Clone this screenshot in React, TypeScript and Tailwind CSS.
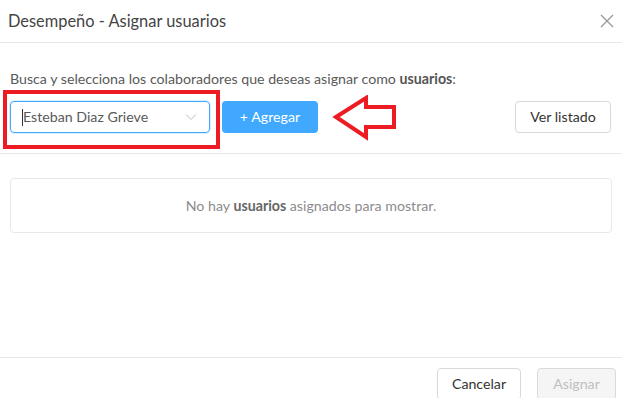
const font = { fontFamily: 'Lato, "Liberation Sans", sans-serif' };

const App = () => {
  return (
    <div className="w-[622px] h-[398px] overflow-hidden bg-white flex flex-col text-[#595959]" style={font}>
      {/* header */}
      <div className="h-[43px] shrink-0 flex items-center justify-between pl-2 pr-[8px] border-b border-[#e8e8e8]">
        <h1 className="text-[16.4px] text-[#444444]">Desempeño - Asignar usuarios</h1>
        <svg width="14" height="14" viewBox="0 0 14 14" className="text-[#999999]">
          <path d="M1 1 L13 13 M13 1 L1 13" stroke="currentColor" strokeWidth="1.3" fill="none" />
        </svg>
      </div>

      {/* search row */}
      <div className="px-[10px] pt-[26px] pb-[20px] border-b border-[#e8e8e8]">
        <p className="text-[14.2px] leading-5 text-[#595959]">
          Busca y selecciona los colaboradores que deseas asignar como <span className="font-bold text-[#555555]">usuarios</span>:
        </p>
        <div className="relative flex items-center mt-3">
          <div className="relative w-[200px] h-8 rounded border border-[#40a9ff] shadow-[0_0_0_1px_rgba(24,144,255,0.15)] flex items-center pl-[11px] pr-3">
            <span className="w-px h-[17px] bg-[#333333]" />
            <span className="text-[14.2px] text-[#595959]">Esteban Diaz Grieve</span>
            <svg width="12" height="8" viewBox="0 0 12 8" className="ml-auto text-[#bfbfbf]">
              <path d="M1 1.5 L6 6.5 L11 1.5" stroke="currentColor" strokeWidth="1" fill="none" />
            </svg>
            {/* annotation frame */}
            <div className="absolute -left-[8px] -top-[12px] w-[217px] h-[59px] border-[4px] border-[#ed1c24] pointer-events-none" />
          </div>
          <button className="ml-3 w-[96px] h-8 rounded bg-[#40a9ff] text-white text-[14.2px]">+ Agregar</button>
          {/* annotation arrow */}
          <svg width="66" height="48" viewBox="0 0 66 48" className="absolute left-[322px] -top-[6px]">
            <polygon points="4,22 34,3 34,12 62,12 62,32 34,32 34,42" fill="none" stroke="#ed1c24" strokeWidth="4" strokeLinejoin="miter" />
          </svg>
          <button className="ml-auto mr-px w-[96px] h-8 rounded border border-[#d9d9d9] bg-white text-[14.2px] text-[#333333]">Ver listado</button>
        </div>
      </div>

      {/* empty state */}
      <div className="px-[10px] pt-[24px]">
        <div className="h-[55px] rounded border border-[#e8e8e8] flex items-center justify-center text-[14.2px] text-[#8c8c8c]">
          <span>
            No hay <span className="font-bold text-[#666666]">usuarios</span> asignados para mostrar.
          </span>
        </div>
      </div>

      {/* footer */}
      <div className="mt-auto h-[41px] shrink-0 border-t border-[#e8e8e8] flex justify-end gap-4 pt-[10px] pr-[6px]">
        <button className="w-[84px] h-8 rounded border border-[#d9d9d9] bg-white text-[14.2px] text-[#333333]">Cancelar</button>
        <button className="w-[79px] h-8 rounded border border-[#d9d9d9] bg-[#f5f5f5] text-[14.2px] text-[#bfbfbf]">Asignar</button>
      </div>
    </div>
  );
};

export default App;
